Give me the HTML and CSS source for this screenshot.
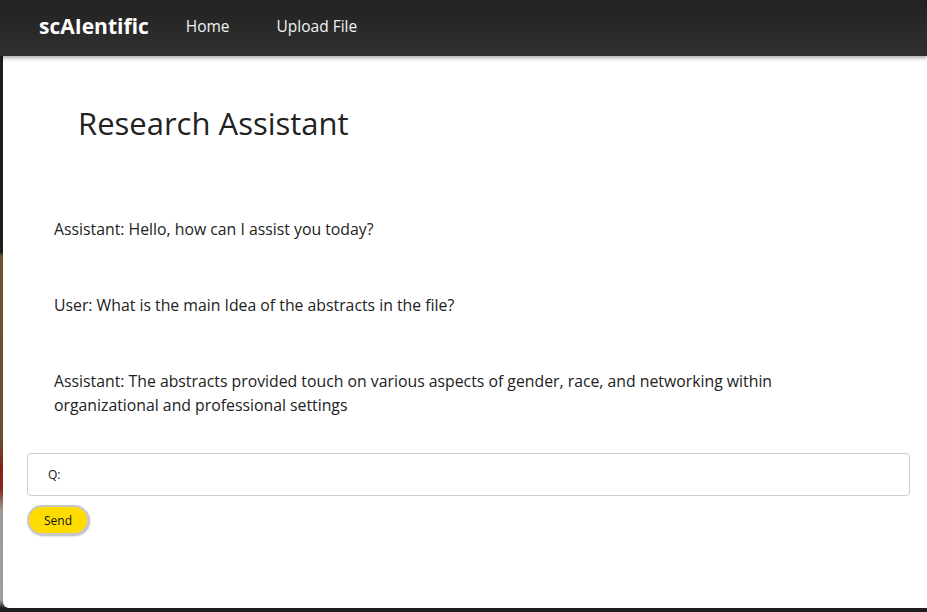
FILE: index.html
```html
<!DOCTYPE html>
<html>
<head>
<meta charset="utf-8">
<link rel="stylesheet" href="styles.css">
</head>
<body>
<nav class="navbar">
  <span class="brand">scAIentific</span>
  <a class="nav-link" href="#">Home</a>
  <a class="nav-link" href="#">Upload File</a>
</nav>
<main class="card">
  <h1 class="title">Research Assistant</h1>
  <div class="messages">
    <p class="msg">Assistant: Hello, how can I assist you today?</p>
    <p class="msg">User: What is the main Idea of the abstracts in the file?</p>
    <p class="msg">Assistant: The abstracts provided touch on various aspects of gender, race, and networking within organizational and professional settings</p>
  </div>
  <form class="ask">
    <div class="input">Q:</div>
    <button type="button" class="send">Send</button>
  </form>
</main>
</body>
</html>
```
FILE: styles.css
```css
html, body {
  margin: 0;
  height: 612px;
  overflow: hidden;
}
body {
  font-family: "Open Sans", "Noto Sans", sans-serif;
  color: #222;
  background: linear-gradient(to bottom, #1e1e1e 0, #1e1e1e 252px, #6f5330 256px, #6a4e2c 440px, #8a1f10 470px, #8a2a1a 490px, #9c9c94 510px, #a0a09a 600px, #1e1e1e 608px);
}
.navbar {
  height: 56px;
  box-sizing: border-box;
  padding-bottom: 4px;
  display: flex;
  align-items: center;
  padding-left: 39px;
  background: linear-gradient(to bottom, #222 0, #303030 100%);
  box-shadow: 0 2px 4px rgba(0,0,0,0.35);
  position: relative;
  z-index: 1;
}
.brand {
  color: #fff;
  font-weight: 700;
  font-size: 21px;
  margin-right: 37px;
}
.nav-link {
  color: #f2f2f2;
  text-decoration: none;
  font-size: 15.5px;
  margin-right: 47px;
}
.card {
  margin-left: 3px;
  height: 552px;
  background: #fff;
  border-bottom-left-radius: 6px;
  box-sizing: border-box;
  padding-top: 46px;
}
.title {
  margin: 0 0 0 75px;
  font-size: 31px;
  font-weight: 500;
  line-height: 42px;
  color: #222;
}
.messages {
  margin-top: 73px;
  padding-left: 51px;
  padding-right: 120px;
}
.msg {
  margin: 0 0 52px 0;
  font-size: 15.8px;
  line-height: 24px;
}
.msg:last-child { margin-bottom: 0; }
.ask {
  margin: 36px 17px 0 24px;
}
.input {
  height: 43px;
  border: 1px solid #ccc;
  border-radius: 4px;
  box-sizing: border-box;
  padding-left: 20px;
  display: flex;
  align-items: center;
  font-size: 12px;
}
.send {
  margin-top: 9px;
  width: 62px;
  height: 30px;
  background: #ffdc00;
  border: 2px solid #c8c8c8;
  border-radius: 16px;
  box-shadow: 1px 1px 2px rgba(0,0,0,0.3);
  font-family: inherit;
  font-size: 12px;
  color: #111;
  padding: 0;
}
```
